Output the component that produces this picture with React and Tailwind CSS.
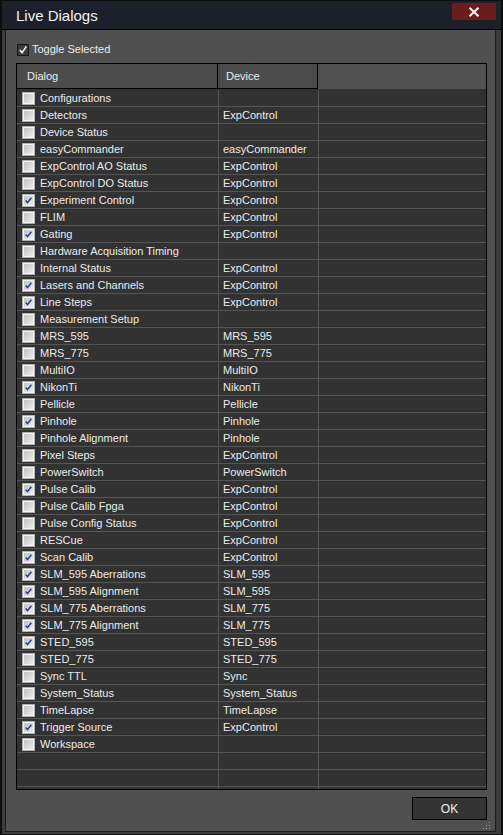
import React from "react";

const rows = [
  ["Configurations", "", false],
  ["Detectors", "ExpControl", false],
  ["Device Status", "", false],
  ["easyCommander", "easyCommander", false],
  ["ExpControl AO Status", "ExpControl", false],
  ["ExpControl DO Status", "ExpControl", false],
  ["Experiment Control", "ExpControl", true],
  ["FLIM", "ExpControl", false],
  ["Gating", "ExpControl", true],
  ["Hardware Acquisition Timing", "", false],
  ["Internal Status", "ExpControl", false],
  ["Lasers and Channels", "ExpControl", true],
  ["Line Steps", "ExpControl", true],
  ["Measurement Setup", "", false],
  ["MRS_595", "MRS_595", false],
  ["MRS_775", "MRS_775", false],
  ["MultiIO", "MultiIO", false],
  ["NikonTi", "NikonTi", true],
  ["Pellicle", "Pellicle", false],
  ["Pinhole", "Pinhole", true],
  ["Pinhole Alignment", "Pinhole", false],
  ["Pixel Steps", "ExpControl", false],
  ["PowerSwitch", "PowerSwitch", false],
  ["Pulse Calib", "ExpControl", true],
  ["Pulse Calib Fpga", "ExpControl", false],
  ["Pulse Config Status", "ExpControl", false],
  ["RESCue", "ExpControl", false],
  ["Scan Calib", "ExpControl", true],
  ["SLM_595 Aberrations", "SLM_595", true],
  ["SLM_595 Alignment", "SLM_595", true],
  ["SLM_775 Aberrations", "SLM_775", true],
  ["SLM_775 Alignment", "SLM_775", true],
  ["STED_595", "STED_595", true],
  ["STED_775", "STED_775", false],
  ["Sync TTL", "Sync", false],
  ["System_Status", "System_Status", false],
  ["TimeLapse", "TimeLapse", false],
  ["Trigger Source", "ExpControl", true],
  ["Workspace", "", false],
  [null, "", false],
  [null, "", false],
  [null, "", false],
];

function RowCheck({ checked }) {
  return (
    <div className="w-[13px] h-[13px] border border-[#b0b0b0] bg-[#f4f4f4] p-px shrink-0">
      <div className="w-full h-full bg-gradient-to-br from-[#c2c2c2] to-[#ececec] relative">
        {checked && (
          <svg viewBox="0 0 11 11" className="absolute inset-0 w-full h-full">
            <path d="M2 5.6 L4.3 8 L9 2.2" fill="none" stroke="#2c3f95" strokeWidth="1.8" />
          </svg>
        )}
      </div>
    </div>
  );
}

export default function App() {
  return (
    <div
      className="w-[503px] h-[835px] bg-[#0e0e0e] pt-px pl-[2px] pr-[2px] pb-px flex flex-col text-[11px] text-[#ececec]"
      style={{ fontFamily: '"Liberation Sans", Arial, sans-serif' }}
    >
      {/* Title bar */}
      <div className="h-[28px] bg-[#1c202a] flex justify-between shrink-0">
        <div className="pl-[14px] pt-[6px] text-[15px] text-[#f2f2f2] leading-[18px]">Live Dialogs</div>
        <div className="mt-[2px] mr-[5px] w-[44px] h-[17px] bg-[#6b1d1d] flex items-center justify-center">
          <svg viewBox="0 0 12 10" className="w-[12px] h-[10px]">
            <path d="M1.5 0.8 L10.5 9.2 M10.5 0.8 L1.5 9.2" stroke="#f4f4f4" strokeWidth="2" />
          </svg>
        </div>
      </div>
      <div className="h-px bg-black shrink-0" />
      {/* Frame */}
      <div className="flex-1 bg-[#3c3c3c] pl-[3px] pr-[5px] pb-[2px] flex">
        <div className="flex-1 border border-t-0 border-[#1c1c1c] bg-[#505050] relative flex flex-col pl-[10px] pr-[8px]">
          {/* Toggle selected */}
          <div className="mt-[13px] h-[13px] flex items-center ml-px">
            <div className="w-[12px] h-[12px] border border-[#151515] bg-[#3a3a3a] relative shrink-0">
              <svg viewBox="0 0 10 10" className="absolute inset-0 w-full h-full">
                <path d="M1.8 5 L4 7.6 L8.4 1.4" fill="none" stroke="#f2f2f2" strokeWidth="1.6" />
              </svg>
            </div>
            <span className="ml-[3px] leading-[13px]">Toggle Selected</span>
          </div>
          {/* Table */}
          <div className="mt-[7px] h-[727px] border border-black flex flex-col">
            <div className="h-[25px] flex shrink-0 bg-[#515151]">
              <div className="w-[201px] border-r border-b border-black bg-[#4b4b4b] pl-[10px] flex items-center">
                Dialog
              </div>
              <div className="w-[100px] border-r border-b border-black bg-[#4b4b4b] pl-[8px] flex items-center">
                Device
              </div>
              <div className="flex-1" />
            </div>
            <div className="flex-1 overflow-hidden bg-[#323232] pt-px">
              {rows.map(([name, device, checked], i) => (
                <div key={i} className="h-[17px] flex border-b border-[#555555]">
                  <div className="w-[202px] border-r border-[#555555] pl-[5px] flex items-center">
                    {name !== null && (
                      <>
                        <RowCheck checked={checked} />
                        <span className="ml-[5px] leading-[16px] whitespace-nowrap">{name}</span>
                      </>
                    )}
                  </div>
                  <div className="w-[100px] border-r border-[#555555] pl-[4px] flex items-center leading-[16px] whitespace-nowrap">
                    {device}
                  </div>
                  <div className="flex-1" />
                </div>
              ))}
            </div>
          </div>
          {/* OK button */}
          <div className="mt-[7px] self-end w-[75px] h-[23px] border border-black bg-[#343434] flex items-center justify-center text-[12px] text-[#f0f0f0]">
            OK
          </div>
          {/* Resize grip */}
          <svg viewBox="0 0 8 8" className="absolute right-[4px] bottom-[1px] w-[8px] h-[8px]">
            <rect x="6" y="0" width="1" height="1" fill="#9a9a9a" />
            <rect x="3" y="3" width="1" height="1" fill="#9a9a9a" />
            <rect x="6" y="3" width="1" height="1" fill="#9a9a9a" />
            <rect x="0" y="6" width="1" height="1" fill="#9a9a9a" />
            <rect x="3" y="6" width="1" height="1" fill="#9a9a9a" />
            <rect x="6" y="6" width="1" height="1" fill="#9a9a9a" />
          </svg>
        </div>
      </div>
    </div>
  );
}
